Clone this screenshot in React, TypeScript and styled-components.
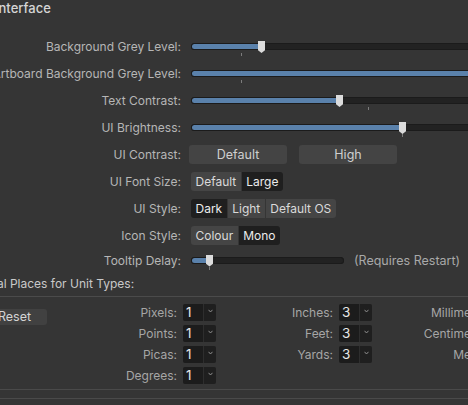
import styled, { createGlobalStyle } from "styled-components";

const GlobalStyle = createGlobalStyle`
  html, body {
    margin: 0;
    padding: 0;
    background: #353535;
  }
  body {
    font-family: Inter, "Liberation Sans", sans-serif;
    -webkit-font-smoothing: antialiased;
  }
`;

type SliderSpec = {
  label: string;
  width: number;
  value: number;
  tick: number;
};

const sliders: SliderSpec[] = [
  { label: "Background Grey Level:", width: 300, value: 70, tick: 50 },
  { label: "Artboard Background Grey Level:", width: 300, value: 300, tick: 50 },
  { label: "Text Contrast:", width: 300, value: 148, tick: 177 },
  { label: "UI Brightness:", width: 300, value: 211, tick: 211 },
];

const unitColumns = [
  {
    width: 156,
    units: [
      { name: "Pixels:", value: "1" },
      { name: "Points:", value: "1" },
      { name: "Picas:", value: "1" },
      { name: "Degrees:", value: "1" },
    ],
  },
  {
    width: 156,
    units: [
      { name: "Inches:", value: "3" },
      { name: "Feet:", value: "3" },
      { name: "Yards:", value: "3" },
    ],
  },
  {
    width: 163,
    units: [
      { name: "Millimetres:", value: "1" },
      { name: "Centimetres:", value: "1" },
      { name: "Metres:", value: "1" },
    ],
  },
];

const Viewport = styled.div`
  width: 468px;
  height: 405px;
  overflow: hidden;
  background: #353535;
`;

// the preferences pane is wider than the window, scrolled a little to the right
const Panel = styled.div`
  margin-left: -60px;
  width: 700px;
`;

const Header = styled.div`
  padding-left: 55px;
  height: 16px;
  line-height: 16px;
  font-size: 13px;
  font-weight: 500;
  color: #d6d6d6;
`;

const Settings = styled.div`
  padding-top: 17px;
`;

const Row = styled.div<{ $h?: number }>`
  display: flex;
  align-items: center;
  height: ${(p) => p.$h ?? 27}px;
`;

const Label = styled.div`
  width: 241px;
  flex-shrink: 0;
  display: flex;
  justify-content: flex-end;
  margin-right: 10px;
  white-space: nowrap;
  font-size: 12px;
  color: #b6b6b6;
`;

const Track = styled.div<{ $w: number }>`
  position: relative;
  width: ${(p) => p.$w}px;
  height: 7px;
  background: #222222;
  border-radius: 4px;
  box-shadow: inset 0 0 0 1px #1b1b1b;
`;

const Fill = styled.div`
  position: absolute;
  left: 1px;
  top: 1px;
  bottom: 1px;
  background: #5a81ab;
  border-radius: 3px;
`;

const Thumb = styled.div`
  position: absolute;
  top: -2px;
  width: 7px;
  height: 12px;
  margin-left: -3px;
  background: #dcdcdc;
  clip-path: polygon(0 0, 100% 0, 100% 78%, 50% 100%, 0 78%);
`;

const Tick = styled.div`
  position: absolute;
  top: 10px;
  width: 1px;
  height: 3px;
  background: #7c7c7c;
`;

const ButtonPair = styled.div`
  display: flex;
  gap: 12px;
  margin-left: -2px;
`;

const WideButton = styled.div`
  width: 98px;
  height: 19px;
  line-height: 19px;
  text-align: center;
  background: #444444;
  border-radius: 3px;
  font-size: 12.5px;
  color: #cfcfcf;
`;

const Segmented = styled.div`
  display: flex;
  gap: 1px;
  border-radius: 3px;
  overflow: hidden;
`;

const Segment = styled.div<{ $on?: boolean }>`
  height: 19px;
  line-height: 19px;
  padding: 0 4.5px;
  font-size: 12px;
  color: ${(p) => (p.$on ? "#ececec" : "#dadada")};
  background: ${(p) => (p.$on ? "#1f1f1f" : "#454545")};
`;

const Note = styled.div`
  margin-left: 10px;
  font-size: 12.5px;
  color: #a9a9a9;
`;

const SectionTitle = styled.div`
  padding-top: 5px;
  padding-left: 21px;
  height: 16px;
  line-height: 16px;
  font-size: 12px;
  color: #c9c9c9;
`;

const Divider = styled.div`
  margin-top: 4px;
  height: 1px;
  background: #4b4b4b;
`;

const Units = styled.div`
  display: flex;
  padding-top: 7px;
  height: 81px;
`;

const ResetButton = styled.div`
  margin: 5px 13px 0 42px;
  width: 65px;
  height: 16px;
  line-height: 16px;
  text-align: center;
  background: #414141;
  border-radius: 3px;
  font-size: 12.5px;
  color: #d4d4d4;
`;

const UnitColumn = styled.div<{ $w: number }>`
  width: ${(p) => p.$w}px;
  display: flex;
  flex-direction: column;
  gap: 4px;
`;

const UnitRow = styled.div`
  display: flex;
  align-items: center;
  justify-content: flex-end;
  gap: 6px;
  height: 17px;
`;

const UnitLabel = styled.div`
  font-size: 12px;
  color: #a6a6a6;
  white-space: nowrap;
`;

const Stepper = styled.div`
  display: flex;
  gap: 1px;
  width: 33px;
  height: 17px;
  border-radius: 2px;
  overflow: hidden;
  background: #2e2e2e;
`;

const StepperValue = styled.div`
  width: 20px;
  padding-left: 3px;
  box-sizing: border-box;
  background: #1c1c1c;
  font-size: 13.5px;
  line-height: 17px;
  color: #e8e8e8;
`;

const StepperArrow = styled.div`
  flex: 1;
  background: #1f1f1f;
  display: flex;
  justify-content: center;
  padding-top: 5px;
  box-sizing: border-box;
`;

const Footer = styled.div`
  margin-top: 4px;
  height: 8px;
  border-top: 1px solid #4a4a4a;
  border-bottom: 1px solid #4a4a4a;
`;

function Slider({ width, value, tick }: { width: number; value: number; tick: number }) {
  return (
    <Track $w={width}>
      <Fill style={{ width: Math.max(value - 1, 0) }} />
      <Tick style={{ left: tick }} />
      <Thumb style={{ left: value }} />
    </Track>
  );
}

function Chevron() {
  return (
    <svg width="5" height="4" viewBox="0 0 5 4">
      <polyline points="0.5 0.8 2.5 3 4.5 0.8" fill="none" stroke="#9a9a9a" strokeWidth="0.9" />
    </svg>
  );
}

export default function App() {
  return (
    <>
      <GlobalStyle />
      <Viewport>
        <Panel>
          <Header>Interface</Header>
          <Settings>
            {sliders.map((s) => (
              <Row key={s.label}>
                <Label>{s.label}</Label>
                <Slider width={s.width} value={s.value} tick={s.tick} />
              </Row>
            ))}
            <Row>
              <Label>UI Contrast:</Label>
              <ButtonPair>
                <WideButton>Default</WideButton>
                <WideButton>High</WideButton>
              </ButtonPair>
            </Row>
            <Row>
              <Label>UI Font Size:</Label>
              <Segmented>
                <Segment>Default</Segment>
                <Segment $on>Large</Segment>
              </Segmented>
            </Row>
            <Row>
              <Label>UI Style:</Label>
              <Segmented>
                <Segment $on>Dark</Segment>
                <Segment>Light</Segment>
                <Segment>Default OS</Segment>
              </Segmented>
            </Row>
            <Row>
              <Label>Icon Style:</Label>
              <Segmented>
                <Segment>Colour</Segment>
                <Segment $on>Mono</Segment>
              </Segmented>
            </Row>
            <Row $h={22}>
              <Label>Tooltip Delay:</Label>
              <Slider width={153} value={18} tick={18} />
              <Note>(Requires Restart)</Note>
            </Row>
          </Settings>
          <SectionTitle>Decimal Places for Unit Types:</SectionTitle>
          <Divider />
          <Units>
            <ResetButton>Reset</ResetButton>
            {unitColumns.map((col, i) => (
              <UnitColumn key={i} $w={col.width}>
                {col.units.map((u) => (
                  <UnitRow key={u.name}>
                    <UnitLabel>{u.name}</UnitLabel>
                    <Stepper>
                      <StepperValue>{u.value}</StepperValue>
                      <StepperArrow>
                        <Chevron />
                      </StepperArrow>
                    </Stepper>
                  </UnitRow>
                ))}
              </UnitColumn>
            ))}
          </Units>
          <Footer />
        </Panel>
      </Viewport>
    </>
  );
}
